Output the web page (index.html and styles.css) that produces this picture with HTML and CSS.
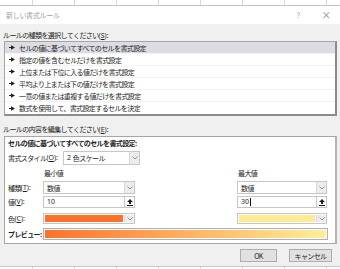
FILE: index.html
```html
<!DOCTYPE html>
<html lang="ja">
<head>
<meta charset="utf-8">
<title>新しい書式ルール</title>
<link rel="stylesheet" href="styles.css">
</head>
<body>
<div class="sheet top"></div>
<div class="dialog">
  <div class="titlebar">
    <span class="title">新しい書式ルール</span>
    <span class="help">?</span>
    <span class="close">×</span>
  </div>
  <div class="body">
    <div class="label l1">ルールの種類を選択してください<span class="lat">(<u>S</u>):</span></div>
    <ul class="rules">
      <li class="sel"><svg class="arr" viewBox="0 0 6 5" width="6" height="5"><rect x="0" y="2" width="2" height="1"/><polygon points="2,0.3 6,2.5 2,4.7"/></svg>セルの値に基づいてすべてのセルを書式設定</li>
      <li><svg class="arr" viewBox="0 0 6 5" width="6" height="5"><rect x="0" y="2" width="2" height="1"/><polygon points="2,0.3 6,2.5 2,4.7"/></svg>指定の値を含むセルだけを書式設定</li>
      <li><svg class="arr" viewBox="0 0 6 5" width="6" height="5"><rect x="0" y="2" width="2" height="1"/><polygon points="2,0.3 6,2.5 2,4.7"/></svg>上位または下位に入る値だけを書式設定</li>
      <li><svg class="arr" viewBox="0 0 6 5" width="6" height="5"><rect x="0" y="2" width="2" height="1"/><polygon points="2,0.3 6,2.5 2,4.7"/></svg>平均より上または下の値だけを書式設定</li>
      <li><svg class="arr" viewBox="0 0 6 5" width="6" height="5"><rect x="0" y="2" width="2" height="1"/><polygon points="2,0.3 6,2.5 2,4.7"/></svg>一意の値または重複する値だけを書式設定</li>
      <li><svg class="arr" viewBox="0 0 6 5" width="6" height="5"><rect x="0" y="2" width="2" height="1"/><polygon points="2,0.3 6,2.5 2,4.7"/></svg>数式を使用して、書式設定するセルを決定</li>
    </ul>
    <div class="label l2">ルールの内容を編集してください<span class="lat">(<u>E</u>):</span></div>
    <div class="editbox">
      <div class="etitle">セルの値に基づいてすべてのセルを書式設定:</div>
      <div class="style-row">
        <span class="lab style-lab">書式スタイル<span class="lat">(<u>O</u>):</span></span>
        <div class="combo style-combo"><span class="val"><span class="lat">2&nbsp;</span>色スケール</span><span class="dd"><svg viewBox="0 0 6 4" width="6" height="4"><polyline points="0.5,0.5 3,3 5.5,0.5"/></svg></span></div>
      </div>
      <div class="grid">
        <span></span><span class="hdr">最小値</span><span></span><span class="hdr">最大値</span>

        <span class="lab r-type">種類<span class="lat">(<u>T</u>):</span></span>
        <div class="combo r-type"><span class="val">数値</span><span class="dd"><svg viewBox="0 0 6 4" width="6" height="4"><polyline points="0.5,0.5 3,3 5.5,0.5"/></svg></span></div>
        <span></span>
        <div class="combo r-type"><span class="val">数値</span><span class="dd"><svg viewBox="0 0 6 4" width="6" height="4"><polyline points="0.5,0.5 3,3 5.5,0.5"/></svg></span></div>

        <span class="lab r-val">値<span class="lat">(<u>V</u>):</span></span>
        <div class="input r-val"><span class="val lat">10</span><span class="rng"><svg viewBox="0 0 6 7" width="6" height="7"><polygon points="3,0 0,3 2,3 2,5 4,5 4,3 6,3"/><rect x="0" y="6" width="6" height="1"/></svg></span></div>
        <span></span>
        <div class="input r-val"><span class="val lat">30<span class="caret"></span></span><span class="rng"><svg viewBox="0 0 6 7" width="6" height="7"><polygon points="3,0 0,3 2,3 2,5 4,5 4,3 6,3"/><rect x="0" y="6" width="6" height="1"/></svg></span></div>

        <span class="lab r-col">色<span class="lat">(<u>C</u>):</span></span>
        <div class="combo color r-col"><span class="swatch orange"></span><span class="dd"><svg viewBox="0 0 6 4" width="6" height="4"><polyline points="0.5,0.5 3,3 5.5,0.5"/></svg></span></div>
        <span></span>
        <div class="combo color r-col"><span class="swatch yellow"></span><span class="dd"><svg viewBox="0 0 6 4" width="6" height="4"><polyline points="0.5,0.5 3,3 5.5,0.5"/></svg></span></div>
      </div>
      <div class="preview-row">
        <span class="lab bold">プレビュー:</span>
        <div class="preview"><div class="grad"></div></div>
      </div>
    </div>
    <div class="buttons">
      <button class="btn ok">OK</button>
      <button class="btn cancel">キャンセル</button>
    </div>
  </div>
</div>
<div class="sheet bottom"></div>
</body>
</html>
```

FILE: styles.css
```css
* { box-sizing: border-box; margin: 0; padding: 0; }
html, body { width: 340px; height: 269px; overflow: hidden; background: #fff; }
body {
  font-family: "Noto Sans CJK JP", "Noto Sans", sans-serif;
  font-size: 7px;
  letter-spacing: -0.6px;
  line-height: 10px;
  color: #1e1e1e;
}
u { text-decoration: underline; text-underline-offset: 1px; }
.lat { letter-spacing: 0; font-family: "Noto Sans", "Liberation Sans", sans-serif; }

.sheet {
  background-image: repeating-linear-gradient(to right, transparent 0 41px, #d9d9d9 41px 42px);
  background-position: -9px 0;
}
.sheet.top { height: 5px; }
.sheet.bottom { height: 2px; }

.dialog {
  height: 262px;
  border-top: 1px solid #c4c4c4;
  border-bottom: 1px solid #c4c4c4;
  display: flex;
  flex-direction: column;
}
.titlebar {
  height: 18px;
  background: #fff;
  display: flex;
  align-items: center;
  padding-left: 6px;
  color: #a0a0a0;
}
.title { flex: 1; letter-spacing: -0.3px; }
.help { width: 10px; margin-right: 18px; text-align: center; color: #9a9a9a; }
.close { width: 10px; margin-right: 9px; text-align: center; color: #8c8c8c; font-size: 10px; }

.body {
  flex: 1;
  background: #f0f0f0;
  padding: 0 3px;
  display: flex;
  flex-direction: column;
}
.label { height: 10px; }
.l1 { margin-top: 6px; }
.l2 { margin-top: 8px; }

.rules {
  list-style: none;
  margin-top: 1px;
  margin-left: 1px;
  background: #fff;
  border-top: 1px solid #a6a6a6;
  border-left: 1px solid #a6a6a6;
  border-right: 2px solid #8c8c8c;
  border-bottom: 2px solid #8c8c8c;
}
.rules li {
  height: 12px;
  display: flex;
  align-items: center;
  padding-left: 4px;
  border-bottom: 1px solid #f3f3f3;
}
.rules li:last-child { border-bottom: none; }
.rules li.sel { background: #dcdde3; }
.arr { fill: #1e1e1e; margin-right: 4px; flex: none; }

.editbox {
  margin-top: 2px;
  margin-left: 1px;
  height: 108px;
  background: #fff;
  border-top: 1px solid #a6a6a6;
  border-left: 1px solid #a6a6a6;
  border-right: 2px solid #b4b4b4;
  border-bottom: 1px solid #a6a6a6;
  padding: 0 8px 3px 3px;
}
.etitle { margin-top: 1px; height: 10px; font-weight: 700; }
.style-row { margin-top: 3px; height: 14px; display: flex; align-items: center; }
.style-lab { width: 55px; }
.style-combo { width: 77px; height: 14px; }

.grid {
  display: grid;
  grid-template-columns: 35px 92px 1fr 90px;
  grid-template-rows: 10px 16px 14px 16px;
  margin-top: 3px;
  align-items: end;
}
.hdr { height: 10px; padding-left: 1px; }
.r-type { height: 13px; }
.r-val { height: 12px; }
.r-col { height: 11px; }
.lab { display: flex; align-items: center; }

.combo, .input {
  display: flex;
  align-items: stretch;
  background: #fff;
  border: 1px solid #c6c6c6;
}
.combo .val, .input .val { flex: 1; padding-left: 3px; display: flex; align-items: center; }
.dd {
  width: 10px;
  background: #ececec;
  border-left: 1px solid #dadada;
  display: flex;
  align-items: center;
  justify-content: center;
}
.dd svg { fill: none; stroke: #8a8a8a; stroke-width: 0.9; }
.rng {
  width: 10px;
  border-left: 1px solid #c6c6c6;
  display: flex;
  align-items: center;
  justify-content: center;
}
.rng svg { fill: #222; }
.caret { display: inline-block; width: 1px; height: 8px; background: #111; margin-left: 1px; vertical-align: middle; }

.combo.color { padding: 1px 0 1px 1px; }
.swatch { flex: 1; margin-right: 1px; }
.swatch.orange { background: #ff7128; }
.swatch.yellow { background: #ffeb94; }

.preview-row { margin-top: 4px; height: 12px; display: flex; align-items: stretch; }
.preview-row .lab { width: 35px; }
.bold { font-weight: 700; }
.preview {
  flex: 1;
  margin-right: -1px;
  border: 1px solid #b0b0b0;
  padding: 1px;
  background: #fff;
}
.grad { height: 100%; background: linear-gradient(to right, #ff7128, #ffef9c); }

.buttons {
  margin-top: 5px;
  display: flex;
  justify-content: flex-end;
  padding-right: 5px;
  gap: 12px;
}
.btn {
  height: 13px;
  font: inherit;
  letter-spacing: inherit;
  color: #1e1e1e;
  background: #e1e1e1;
  border: 1px solid #adadad;
}
.btn.ok { width: 37px; }
.btn.cancel { width: 43px; }
```
